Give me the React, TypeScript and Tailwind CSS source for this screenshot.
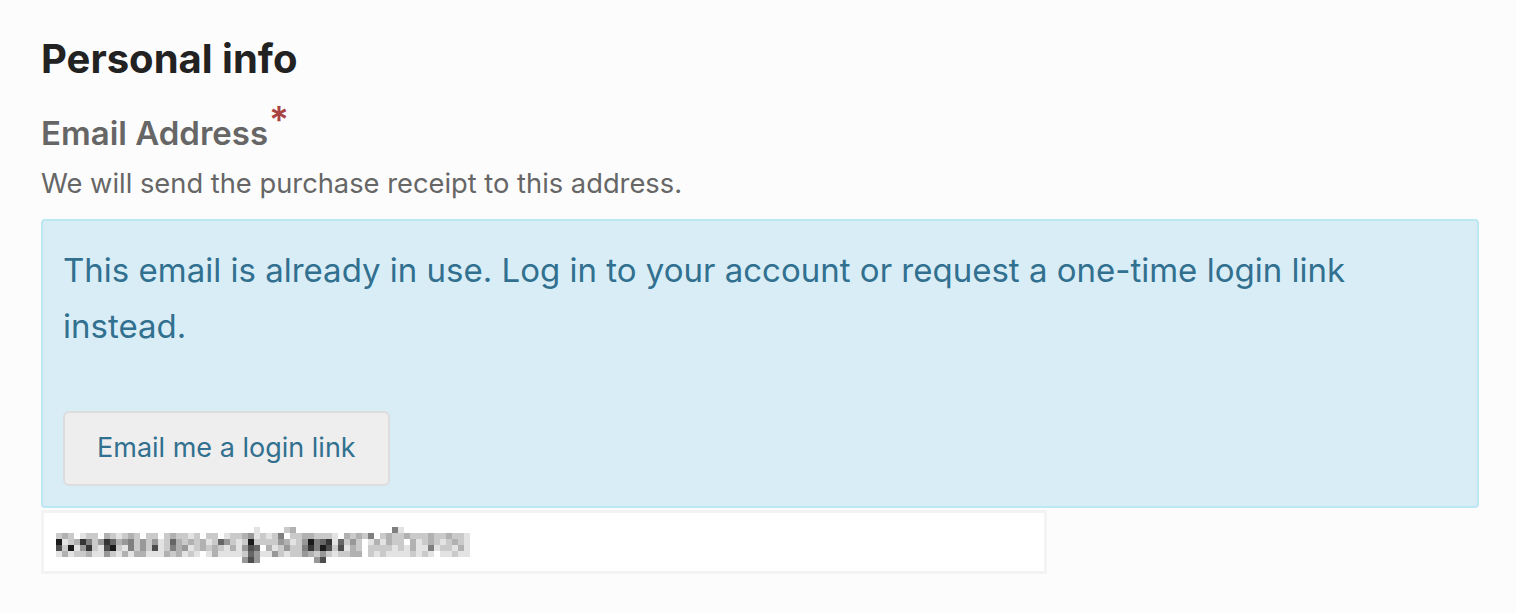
import React from "react"

// pixelated stand-in for the blurred e-mail address, one digit per 6px cell (0 = white, 9 = near black)
const MOSAIC_ROWS = [
  "0000000000000000000000000000000001" + "00002300000000000000005100000000000",
  "2320122032123202202322120220122341" + "21250223322210323250232232223223221",
  "9123852486345242412632323126421292" + "22243124956816242013132203123212321",
  "7291482179215242712534123232131476" + "03124225859727132022221213115122131",
  "1312231142131331113231210131111264" + "11421224324212233021211112121011211",
  "0000000000000000000000000000000474" + "00000000047000000000000000000000000",
]
const COLS = 69
const CELL = 6

function Mosaic() {
  const cells: React.ReactNode[] = []
  MOSAIC_ROWS.forEach((row, r) => {
    row.padEnd(COLS, "0").slice(0, COLS).split("").forEach((ch, c) => {
      const d = Number(ch)
      if (!d) return
      const g = 252 - d * 25
      cells.push(
        <rect key={`${r}-${c}`} x={c * CELL} y={r * CELL} width={CELL} height={CELL} fill={`rgb(${g},${g},${g})`} />
      )
    })
  })
  return (
    <svg width={COLS * CELL} height={MOSAIC_ROWS.length * CELL} viewBox={`0 0 ${COLS * CELL} ${MOSAIC_ROWS.length * CELL}`}>
      {cells}
    </svg>
  )
}

export default function App() {
  return (
    <div className="min-h-[614px] w-[1516px] bg-[#fcfcfc] pl-[41px] pr-[37px] pt-[35px] font-['Inter','Noto_Sans',sans-serif]">
      <h2 className="text-[40px] font-bold leading-[48px] text-[#222]">Personal info</h2>

      <div className="mt-[30px]">
        <label className="block text-[33px] font-semibold leading-[40px] text-[#666]">
          Email Address<span className="relative -top-[12px] ml-[1px] text-[37px] leading-[0] text-[#a94442]">*</span>
        </label>
        <p className="mt-[13px] text-[27.3px] leading-[36px] text-[#666]">We will send the purchase receipt to this address.</p>
      </div>

      <div className="mt-[17px] rounded-[4px] border-2 border-[#bce8f1] bg-[#d9edf7] pl-[20px] pr-[24px] pt-[21px] pb-[20px] text-[#31708f]">
        <p className="text-[33px] leading-[56px]">
          This email is already in use. Log in to your account or request a one-time login link instead.
        </p>
        <button className="mt-[57px] h-[75px] rounded-[6px] border-2 border-[#dddddd] bg-[#eeeeee] px-[32px] text-[27px] text-[#31708f]">
          Email me a login link
        </button>
      </div>

      <div className="mt-[2px] h-[64px] w-[1006px] border-[3px] border-[#f3f3f3] bg-white pl-[12px] pt-[14px]">
        <Mosaic />
      </div>
    </div>
  )
}
